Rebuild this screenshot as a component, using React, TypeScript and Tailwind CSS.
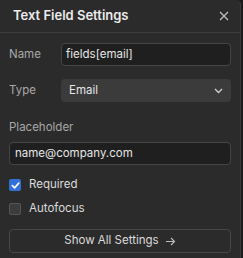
import React from 'react';

const font = { fontFamily: 'Inter, "Noto Sans", sans-serif' };

const Checkbox: React.FC<{ checked?: boolean; label: string }> = ({ checked, label }) => (
  <label className="flex items-center gap-[8px] h-[24px]">
    {checked ? (
      <span className="w-[12px] h-[12px] rounded-[2px] bg-[#3170d8] flex items-center justify-center">
        <svg width="9" height="9" viewBox="0 0 10 10" fill="none">
          <path d="M1.5 5.2 L4 7.6 L8.6 2.4" stroke="#fff" strokeWidth="1.8" strokeLinecap="round" strokeLinejoin="round" />
        </svg>
      </span>
    ) : (
      <span className="w-[12px] h-[12px] rounded-[2px] bg-[#3c3c3c] border border-[#555]" />
    )}
    <span className="text-[11.5px] text-[#dcdcdc]">{label}</span>
  </label>
);

const App: React.FC = () => {
  return (
    <div className="flex w-[243px] h-[258px] bg-[#1c1c1c]" style={font}>
      <div className="w-[241px] h-full bg-[#2b2b2b] border-r border-[#3a3a3a] rounded-tr-[5px] flex flex-col">
        <div className="h-[33px] flex items-center justify-between pl-[13px] pr-[11px] border-b border-[#3d3d3d]">
          <span className="text-[13px] font-semibold text-[#ececec]">Text Field Settings</span>
          <svg width="10" height="10" viewBox="0 0 10 10" fill="none">
            <path d="M1 1 L9 9 M9 1 L1 9" stroke="#bdbdbd" strokeWidth="1.3" />
          </svg>
        </div>

        <div className="px-[9px] flex flex-col">
          <div className="flex items-center mt-[10px]">
            <span className="w-[52px] text-[11.5px] text-[#a8a8a8]">Name</span>
            <div className="flex-1 h-[23px] rounded-[4px] bg-[#1f1f1f] border border-[#454545] flex items-center px-[4px] text-[11.5px] text-[#e6e6e6]">
              fields[email]
            </div>
          </div>

          <div className="flex items-center mt-[13px]">
            <span className="w-[52px] text-[11.5px] text-[#a8a8a8]">Type</span>
            <div className="flex-1 h-[23px] rounded-[4px] bg-[#3b3b3b] flex items-center justify-between pl-[8px] pr-[8px] text-[11.5px] text-[#e6e6e6]">
              <span>Email</span>
              <svg width="9" height="6" viewBox="0 0 9 6" fill="none">
                <path d="M1 1 L4.5 4.5 L8 1" stroke="#d0d0d0" strokeWidth="1.3" />
              </svg>
            </div>
          </div>

          <span className="mt-[17px] h-[16px] leading-[16px] text-[11.5px] text-[#a8a8a8]">Placeholder</span>
          <div className="mt-[7px] h-[23px] rounded-[4px] bg-[#1f1f1f] border border-[#454545] flex items-center px-[5px] text-[11.5px] text-[#e6e6e6]">
            name@company.com
          </div>

          <div className="mt-[8px] flex flex-col">
            <Checkbox checked label="Required" />
            <Checkbox label="Autofocus" />
          </div>

          <button className="mt-[8px] h-[24px] rounded-[4px] border border-[#474747] bg-[#2b2b2b] flex items-center justify-center gap-[6px] text-[11.5px] text-[#dcdcdc]">
            <span>Show All Settings</span>
            <svg width="11" height="9" viewBox="0 0 11 9" fill="none">
              <path d="M1 4.5 H9.5 M6 1 L9.5 4.5 L6 8" stroke="#bdbdbd" strokeWidth="1.1" />
            </svg>
          </button>
        </div>
      </div>
    </div>
  );
};

export default App;
